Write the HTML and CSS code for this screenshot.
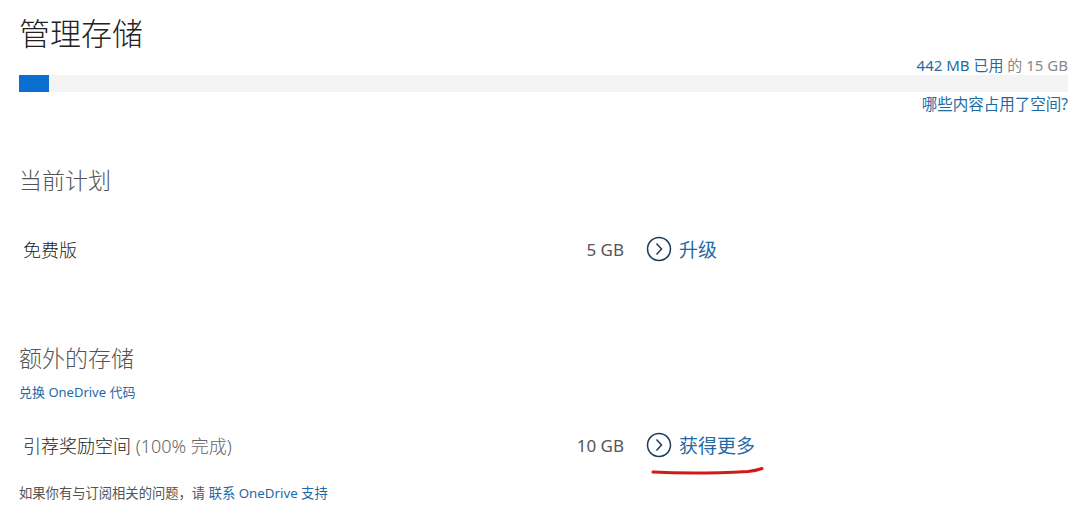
FILE: index.html
```html
<!DOCTYPE html>
<html lang="zh-CN">
<head>
    <meta charset="UTF-8">
    <meta name="viewport" content="width=device-width, initial-scale=1.0">
    <title>管理存储</title>
    <link rel="stylesheet" href="styles.css">
</head>
<body>
    <div class="page">
        <div class="header">
            <h1>管理存储</h1>
            <div class="usage-text"><span class="link">442 MB 已用</span> 的 15 GB</div>
        </div>
        <div class="quota-bar">
            <div class="quota-fill" style="width: 30px"></div>
        </div>
        <div class="usage-link"><a class="link" href="#">哪些内容占用了空间?</a></div>

        <section class="section plan">
            <h2>当前计划</h2>
            <div class="plan-row">
                <span class="plan-name">免费版</span>
                <span class="plan-size">5 GB</span>
                <a class="action" href="#">
                    <svg class="chevron" width="26" height="26" viewBox="0 0 26 26">
                        <circle cx="13" cy="13" r="11.5" fill="none" stroke="#1d3c5a" stroke-width="1.5"/>
                        <path d="M10.5 7.5 L15.5 13 L10.5 18.5" fill="none" stroke="#1d3c5a" stroke-width="1.5"/>
                    </svg>
                    <span>升级</span>
                </a>
            </div>
        </section>

        <section class="section extra">
            <h2>额外的存储</h2>
            <a class="link small" href="#">兑换 OneDrive 代码</a>
            <div class="plan-row">
                <span class="plan-name">引荐奖励空间 <span class="light">(100% 完成)</span></span>
                <span class="plan-size">10 GB</span>
                <a class="action" href="#">
                    <svg class="chevron" width="26" height="26" viewBox="0 0 26 26">
                        <circle cx="13" cy="13" r="11.5" fill="none" stroke="#1d3c5a" stroke-width="1.5"/>
                        <path d="M10.5 7.5 L15.5 13 L10.5 18.5" fill="none" stroke="#1d3c5a" stroke-width="1.5"/>
                    </svg>
                    <span>获得更多</span>
                </a>
                <svg class="scribble" width="116" height="12" viewBox="0 0 116 12">
                    <path d="M3 8 C30 9.5 70 9 98 7.5 C104 7 108 6 112 4.5" fill="none" stroke="#d11a1a" stroke-width="3" stroke-linecap="round"/>
                </svg>
            </div>
        </section>

        <p class="footer">如果你有与订阅相关的问题，请 <a class="link" href="#">联系 OneDrive 支持</a></p>
    </div>
</body>
</html>
```

FILE: styles.css
```css
body {
    margin: 0;
    background: #fff;
    color: #333;
    font-family: "Noto Sans", "Noto Sans CJK SC", sans-serif;
}

a {
    text-decoration: none;
}

.link {
    color: #1f6aa5;
}

.page {
    padding: 0 12px 0 19px;
}

.header {
    display: flex;
    justify-content: space-between;
    align-items: flex-end;
    height: 75px;
}

h1 {
    margin: 0;
    padding-top: 13px;
    align-self: flex-start;
    font-size: 31px;
    font-weight: 300;
    line-height: 40px;
    color: #222;
}

.usage-text {
    font-size: 15px;
    line-height: 20px;
    color: #888;
}

.quota-bar {
    height: 17px;
    background: #f3f3f3;
}

.quota-fill {
    height: 100%;
    background: #0a6fcf;
}

.usage-link {
    text-align: right;
    font-size: 15.5px;
    line-height: 22px;
    margin-top: 1px;
}

.section h2 {
    margin: 0;
    font-size: 23px;
    font-weight: 300;
    line-height: 32px;
    color: #555;
}

.plan {
    padding-top: 49px;
}

.extra {
    padding-top: 73px;
}

.plan-row {
    position: relative;
    display: grid;
    grid-template-columns: 516px 85px auto;
    align-items: center;
    height: 40px;
    padding-left: 4px;
    color: #444;
    font-size: 18px;
}

.plan .plan-row {
    margin-top: 33px;
}

.extra .plan-row {
    margin-top: 23px;
}

.plan-name {
    font-weight: 300;
    color: #222;
}

.plan-size {
    text-align: right;
    font-size: 17px;
    color: #555;
}

.light {
    color: #666;
}

.action {
    display: flex;
    align-items: center;
    gap: 7px;
    margin-left: 22px;
    color: #1f6aa5;
    font-size: 19px;
}

.small {
    display: block;
    font-size: 13px;
    line-height: 20px;
    margin-top: 8px;
}

.scribble {
    position: absolute;
    left: 631px;
    top: 39px;
}

.footer {
    margin: 18px 0 0;
    font-size: 13.3px;
    line-height: 20px;
    color: #555;
}
```
